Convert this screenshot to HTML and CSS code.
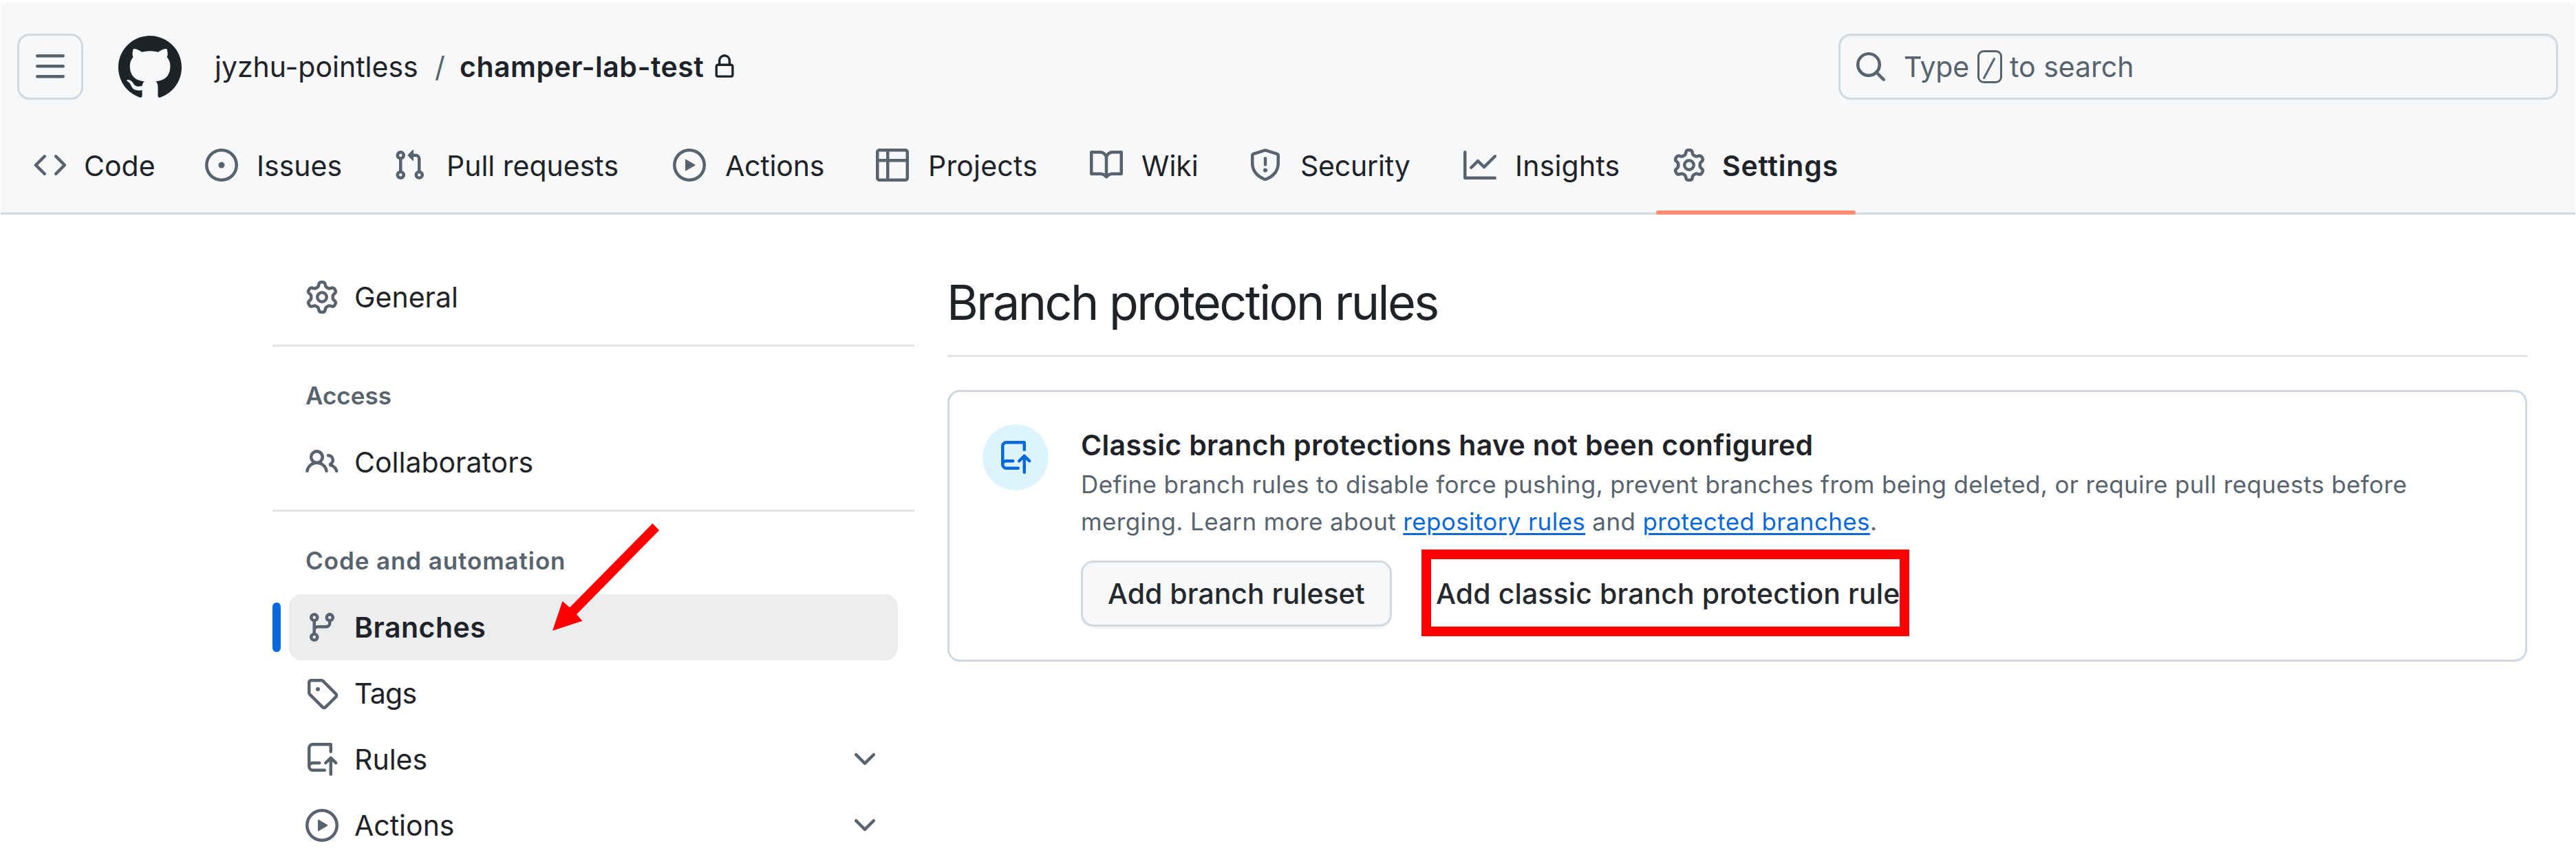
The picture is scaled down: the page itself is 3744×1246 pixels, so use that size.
FILE: index.html
```
<!DOCTYPE html>
<html lang="en">
<head>
<meta charset="utf-8">
<title>Branches · jyzhu-pointless/champer-lab-test</title>
<link rel="stylesheet" href="styles.css">
</head>
<body>
<svg class="sprite" aria-hidden="true">
  <symbol id="i-bars" viewBox="0 0 16 16"><path d="M1 2.75A.75.75 0 0 1 1.75 2h12.5a.75.75 0 0 1 0 1.5H1.75A.75.75 0 0 1 1 2.75Zm0 5A.75.75 0 0 1 1.75 7h12.5a.75.75 0 0 1 0 1.5H1.75A.75.75 0 0 1 1 7.75ZM1.75 12h12.5a.75.75 0 0 1 0 1.5H1.75a.75.75 0 0 1 0-1.5Z"/></symbol>
  <symbol id="i-mark" viewBox="0 0 24 24"><path d="M12.5.75C6.146.75 1 5.896 1 12.25c0 5.089 3.292 9.387 7.863 10.91.575.101.79-.244.79-.546 0-.273-.014-1.178-.014-2.142-2.889.532-3.636-.704-3.866-1.35-.13-.331-.69-1.352-1.18-1.625-.402-.216-.977-.748-.014-.762.906-.014 1.553.834 1.769 1.179 1.035 1.74 2.688 1.25 3.349.948.1-.747.402-1.25.733-1.538-2.559-.287-5.232-1.279-5.232-5.678 0-1.25.445-2.285 1.178-3.09-.115-.288-.517-1.467.115-3.048 0 0 .963-.302 3.163 1.179.92-.259 1.897-.388 2.875-.388.977 0 1.955.13 2.875.388 2.2-1.495 3.162-1.179 3.162-1.179.633 1.581.23 2.76.115 3.048.733.805 1.179 1.825 1.179 3.09 0 4.413-2.688 5.39-5.247 5.678.417.36.776 1.05.776 2.128 0 1.538-.014 2.774-.014 3.162 0 .302.216.662.79.547C20.709 21.637 24 17.324 24 12.25 24 5.896 18.854.75 12.5.75Z"/></symbol>
  <symbol id="i-lock" viewBox="0 0 16 16"><path d="M4 4a4 4 0 0 1 8 0v2h.25c.966 0 1.75.784 1.75 1.75v5.5A1.75 1.75 0 0 1 12.25 15h-8.5A1.75 1.75 0 0 1 2 13.25v-5.5C2 6.784 2.784 6 3.75 6H4Zm8.25 3.5h-8.5a.25.25 0 0 0-.25.25v5.5c0 .138.112.25.25.25h8.5a.25.25 0 0 0 .25-.25v-5.5a.25.25 0 0 0-.25-.25ZM10.5 6V4a2.5 2.5 0 1 0-5 0v2Z"/></symbol>
  <symbol id="i-search" viewBox="0 0 16 16"><path d="M10.68 11.74a6 6 0 0 1-7.922-8.982 6 6 0 0 1 8.982 7.922l3.04 3.04a.749.749 0 0 1-.326 1.275.749.749 0 0 1-.734-.215ZM11.5 7a4.499 4.499 0 1 0-8.997 0A4.499 4.499 0 0 0 11.5 7Z"/></symbol>
  <symbol id="i-code" viewBox="0 0 16 16"><path d="m11.28 3.22 4.25 4.25a.75.75 0 0 1 0 1.06l-4.25 4.25a.749.749 0 0 1-1.275-.326.749.749 0 0 1 .215-.734L13.94 8l-3.72-3.72a.749.749 0 0 1 .326-1.275.749.749 0 0 1 .734.215Zm-6.56 0a.751.751 0 0 1 1.042.018.751.751 0 0 1 .018 1.042L2.06 8l3.72 3.72a.749.749 0 0 1-.326 1.275.749.749 0 0 1-.734-.215L.47 8.53a.75.75 0 0 1 0-1.06Z"/></symbol>
  <symbol id="i-issue" viewBox="0 0 16 16"><path d="M8 9.5a1.5 1.5 0 1 0 0-3 1.5 1.5 0 0 0 0 3Z"/><path d="M8 0a8 8 0 1 1 0 16A8 8 0 0 1 8 0ZM1.5 8a6.5 6.5 0 1 0 13 0 6.5 6.5 0 0 0-13 0Z"/></symbol>
  <symbol id="i-pull" viewBox="0 0 16 16"><path d="M1.5 3.25a2.25 2.25 0 1 1 3 2.122v5.256a2.251 2.251 0 1 1-1.5 0V5.372A2.25 2.25 0 0 1 1.5 3.25Zm5.677-.177L9.573.677A.25.25 0 0 1 10 .854V2.5h1A2.5 2.5 0 0 1 13.5 5v5.628a2.251 2.251 0 1 1-1.5 0V5a1 1 0 0 0-1-1h-1v1.646a.25.25 0 0 1-.427.177L7.177 3.427a.25.25 0 0 1 0-.354ZM3.75 2.5a.75.75 0 1 0 0 1.5.75.75 0 0 0 0-1.5Zm0 9.5a.75.75 0 1 0 0 1.5.75.75 0 0 0 0-1.5Zm8.25.75a.75.75 0 1 0 1.5 0 .75.75 0 0 0-1.5 0Z"/></symbol>
  <symbol id="i-play" viewBox="0 0 16 16"><path d="M8 0a8 8 0 1 1 0 16A8 8 0 0 1 8 0ZM1.5 8a6.5 6.5 0 1 0 13 0 6.5 6.5 0 0 0-13 0Zm4.879-2.773 4.264 2.559a.25.25 0 0 1 0 .428l-4.264 2.559A.25.25 0 0 1 6 10.559V5.442a.25.25 0 0 1 .379-.215Z"/></symbol>
  <symbol id="i-table" viewBox="0 0 16 16"><path d="M0 1.75C0 .784.784 0 1.75 0h12.5C15.216 0 16 .784 16 1.75v12.5A1.75 1.75 0 0 1 14.25 16H1.75A1.75 1.75 0 0 1 0 14.25ZM6.5 6.5v8h7.75a.25.25 0 0 0 .25-.25V6.5Zm8-1.5V1.75a.25.25 0 0 0-.25-.25H6.5V5Zm-13 1.5v7.75c0 .138.112.25.25.25H5v-8ZM5 5V1.5H1.75a.25.25 0 0 0-.25.25V5Z"/></symbol>
  <symbol id="i-book" viewBox="0 0 16 16"><path d="M0 1.75A.75.75 0 0 1 .75 1h4.253c1.227 0 2.317.59 3 1.501A3.743 3.743 0 0 1 11.006 1h4.245a.75.75 0 0 1 .75.75v10.5a.75.75 0 0 1-.75.75h-4.507a2.25 2.25 0 0 0-1.591.659l-.622.621a.75.75 0 0 1-1.06 0l-.622-.621A2.25 2.25 0 0 0 5.258 13H.75a.75.75 0 0 1-.75-.75Zm7.251 10.324.004-5.073-.002-2.253A2.25 2.25 0 0 0 5.003 2.5H1.5v9h3.757a3.75 3.75 0 0 1 1.994.574ZM8.755 4.75l-.004 7.322a3.752 3.752 0 0 1 1.992-.572H14.5v-9h-3.495a2.25 2.25 0 0 0-2.25 2.25Z"/></symbol>
  <symbol id="i-shield" viewBox="0 0 16 16"><path d="M7.467.133a1.748 1.748 0 0 1 1.066 0l5.25 1.68A1.75 1.75 0 0 1 15 3.48V7c0 1.566-.32 3.182-1.303 4.682-.983 1.498-2.585 2.813-5.032 3.855a1.697 1.697 0 0 1-1.33 0c-2.447-1.042-4.049-2.357-5.032-3.855C1.32 10.182 1 8.566 1 7V3.48a1.75 1.75 0 0 1 1.217-1.667Zm.61 1.429a.25.25 0 0 0-.153 0l-5.25 1.68a.25.25 0 0 0-.174.238V7c0 1.358.275 2.666 1.057 3.86.784 1.194 2.121 2.34 4.366 3.297a.196.196 0 0 0 .154 0c2.245-.956 3.582-2.104 4.366-3.298C13.225 9.666 13.5 8.36 13.5 7V3.48a.251.251 0 0 0-.174-.237l-5.25-1.68ZM8.75 4.75v3a.75.75 0 0 1-1.5 0v-3a.75.75 0 0 1 1.5 0ZM9 10.5a1 1 0 1 1-2 0 1 1 0 0 1 2 0Z"/></symbol>
  <symbol id="i-graph" viewBox="0 0 16 16"><path d="M1.5 1.75V13.5h13.75a.75.75 0 0 1 0 1.5H.75a.75.75 0 0 1-.75-.75V1.75a.75.75 0 0 1 1.5 0Zm14.28 2.53-5.25 5.25a.75.75 0 0 1-1.06 0L7 7.06 4.28 9.78a.751.751 0 0 1-1.042-.018.751.751 0 0 1-.018-1.042l3.25-3.25a.75.75 0 0 1 1.06 0L10 7.94l4.72-4.72a.751.751 0 0 1 1.042.018.751.751 0 0 1 .018 1.042Z"/></symbol>
  <symbol id="i-gear" viewBox="0 0 16 16"><path d="M8 0a8.2 8.2 0 0 1 .701.031C9.444.095 9.99.645 10.16 1.29l.288 1.107c.018.066.079.158.212.224.231.114.454.243.668.386.123.082.233.09.299.071l1.103-.303c.644-.176 1.392.021 1.82.63.27.385.506.792.704 1.218.315.675.111 1.422-.364 1.891l-.814.806c-.049.048-.098.147-.088.294.016.257.016.515 0 .772-.01.147.038.246.088.294l.814.806c.475.469.679 1.216.364 1.891a7.977 7.977 0 0 1-.704 1.217c-.428.61-1.176.807-1.82.63l-1.102-.302c-.067-.019-.177-.011-.3.071a5.909 5.909 0 0 1-.668.386c-.133.066-.194.158-.211.224l-.29 1.106c-.168.646-.715 1.196-1.458 1.26a8.006 8.006 0 0 1-1.402 0c-.743-.064-1.289-.614-1.458-1.26l-.289-1.106c-.018-.066-.079-.158-.212-.224a5.738 5.738 0 0 1-.668-.386c-.123-.082-.233-.09-.299-.071l-1.103.303c-.644.176-1.392-.021-1.82-.63a8.12 8.12 0 0 1-.704-1.218c-.315-.675-.111-1.422.363-1.891l.815-.806c.05-.048.098-.147.088-.294a6.214 6.214 0 0 1 0-.772c.01-.147-.038-.246-.088-.294l-.815-.806C.635 6.045.431 5.298.746 4.623a7.92 7.92 0 0 1 .704-1.217c.428-.61 1.176-.807 1.82-.63l1.102.302c.067.019.177.011.3-.071.214-.143.437-.272.668-.386.133-.066.194-.158.211-.224l.29-1.106C6.009.645 6.556.095 7.299.03 7.53.01 7.764 0 8 0Zm-.571 1.525c-.036.003-.108.036-.137.146l-.289 1.105c-.147.561-.549.967-.998 1.189-.173.086-.34.183-.5.29-.417.278-.97.423-1.529.27l-1.103-.303c-.109-.03-.175.016-.195.045-.22.312-.412.644-.573.99-.014.031-.021.11.059.19l.815.806c.411.406.562.957.53 1.456a4.709 4.709 0 0 0 0 .582c.032.499-.119 1.05-.53 1.456l-.815.806c-.081.08-.073.159-.059.19.162.346.353.677.573.989.02.03.085.076.195.046l1.102-.303c.56-.153 1.113-.008 1.53.27.161.107.328.204.501.29.447.222.85.629.997 1.189l.289 1.105c.029.109.101.143.137.146a6.6 6.6 0 0 0 1.142 0c.036-.003.108-.036.137-.146l.289-1.105c.147-.561.549-.967.998-1.189.173-.086.34-.183.5-.29.417-.278.97-.423 1.529-.27l1.103.303c.109.029.175-.016.195-.045.22-.313.411-.644.573-.99.014-.031.021-.11-.059-.19l-.815-.806c-.411-.406-.562-.957-.53-1.456a4.709 4.709 0 0 0 0-.582c-.032-.499.119-1.05.53-1.456l.815-.806c.081-.08.073-.159.059-.19a6.464 6.464 0 0 0-.573-.989c-.02-.03-.085-.076-.195-.046l-1.102.303c-.56.153-1.113.008-1.53-.27a4.44 4.44 0 0 0-.501-.29c-.447-.222-.85-.629-.997-1.189l-.289-1.105c-.029-.11-.101-.143-.137-.146a6.6 6.6 0 0 0-1.142 0ZM11 8a3 3 0 1 1-6 0 3 3 0 0 1 6 0ZM9.5 8a1.5 1.5 0 1 0-3.001.001A1.5 1.5 0 0 0 9.5 8Z"/></symbol>
  <symbol id="i-people" viewBox="0 0 16 16"><path d="M2 5.5a3.5 3.5 0 1 1 5.898 2.549 5.508 5.508 0 0 1 3.034 4.084.75.75 0 1 1-1.482.235 4 4 0 0 0-7.9 0 .75.75 0 0 1-1.482-.236A5.507 5.507 0 0 1 3.102 8.05 3.493 3.493 0 0 1 2 5.5ZM11 4a3.001 3.001 0 0 1 2.22 5.018 5.01 5.01 0 0 1 2.56 3.012.749.749 0 0 1-.885.954.752.752 0 0 1-.549-.514 3.507 3.507 0 0 0-2.522-2.372.75.75 0 0 1-.574-.73v-.352a.75.75 0 0 1 .416-.672A1.5 1.5 0 0 0 11 5.5.75.75 0 0 1 11 4Zm-5.5-.5a2 2 0 1 0-.001 3.999A2 2 0 0 0 5.5 3.5Z"/></symbol>
  <symbol id="i-branch" viewBox="0 0 16 16"><path d="M9.5 3.25a2.25 2.25 0 1 1 3 2.122V6A2.5 2.5 0 0 1 10 8.5H6a1 1 0 0 0-1 1v1.128a2.251 2.251 0 1 1-1.5 0V5.372a2.25 2.25 0 1 1 1.5 0v1.836A2.493 2.493 0 0 1 6 7h4a1 1 0 0 0 1-1v-.628A2.25 2.25 0 0 1 9.5 3.25Zm-6 0a.75.75 0 1 0 1.5 0 .75.75 0 0 0-1.5 0Zm8.25-.75a.75.75 0 1 0 0 1.5.75.75 0 0 0 0-1.5ZM4.25 12a.75.75 0 1 0 0 1.5.75.75 0 0 0 0-1.5Z"/></symbol>
  <symbol id="i-tag" viewBox="0 0 16 16"><path d="M1 7.775V2.75C1 1.784 1.784 1 2.75 1h5.025c.464 0 .91.184 1.238.513l6.25 6.25a1.75 1.75 0 0 1 0 2.474l-5.026 5.026a1.75 1.75 0 0 1-2.474 0l-6.25-6.25A1.752 1.752 0 0 1 1 7.775Zm1.5 0c0 .066.026.13.073.177l6.25 6.25a.25.25 0 0 0 .354 0l5.025-5.025a.25.25 0 0 0 0-.354l-6.25-6.25a.25.25 0 0 0-.177-.073H2.75a.25.25 0 0 0-.25.25ZM6 5a1 1 0 1 1 0 2 1 1 0 0 1 0-2Z"/></symbol>
  <symbol id="i-push" viewBox="0 0 16 16"><path d="M1 2.5A2.5 2.5 0 0 1 3.5 0h8.75a.75.75 0 0 1 .75.75v3.5a.75.75 0 0 1-1.5 0V1.5h-8a1 1 0 0 0-1 1v6.708A2.493 2.493 0 0 1 3.5 9h3.25a.75.75 0 0 1 0 1.5H3.5a1 1 0 0 0 0 2h5.75a.75.75 0 0 1 0 1.5H3.5A2.5 2.5 0 0 1 1 11.5Zm13.23 7.79h-.001l-1.224-1.224v6.184a.75.75 0 0 1-1.5 0V9.066L10.28 10.29a.75.75 0 0 1-1.06-1.061l2.505-2.504a.75.75 0 0 1 1.06 0L15.29 9.23a.751.751 0 0 1-.018 1.042.751.751 0 0 1-1.042.018Z"/></symbol>
  <symbol id="i-chevron" viewBox="0 0 16 16"><path d="M12.78 5.22a.749.749 0 0 1 0 1.06l-4.25 4.25a.749.749 0 0 1-1.06 0L3.22 6.28a.749.749 0 1 1 1.06-1.06L8 8.939l3.72-3.719a.749.749 0 0 1 1.06 0Z"/></symbol>
</svg>

<header class="header">
  <div class="topbar">
    <button class="menu-button" aria-label="Open menu"><svg class="icon"><use href="#i-bars"/></svg></button>
    <svg class="mark"><use href="#i-mark"/></svg>
    <div class="crumbs">
      <span class="owner">jyzhu-pointless</span>
      <span class="slash">/</span>
      <span class="repo">champer-lab-test</span>
      <svg class="lock"><use href="#i-lock"/></svg>
    </div>
    <div class="search">
      <svg class="icon"><use href="#i-search"/></svg>
      <span class="type">Type</span>
      <kbd class="key"><svg viewBox="0 0 36 48"><path d="M9.5 40.5 24.5 12.5"/></svg></kbd>
      <span class="to-search">to search</span>
    </div>
  </div>
  <nav class="tabs">
    <a class="tab code"><svg class="icon"><use href="#i-code"/></svg><span>Code</span></a>
    <a class="tab issues"><svg class="icon"><use href="#i-issue"/></svg><span>Issues</span></a>
    <a class="tab pulls"><svg class="icon"><use href="#i-pull"/></svg><span>Pull requests</span></a>
    <a class="tab actions"><svg class="icon"><use href="#i-play"/></svg><span>Actions</span></a>
    <a class="tab projects"><svg class="icon"><use href="#i-table"/></svg><span>Projects</span></a>
    <a class="tab wiki"><svg class="icon"><use href="#i-book"/></svg><span>Wiki</span></a>
    <a class="tab security"><svg class="icon"><use href="#i-shield"/></svg><span>Security</span></a>
    <a class="tab insights"><svg class="icon"><use href="#i-graph"/></svg><span>Insights</span></a>
    <a class="tab settings"><svg class="icon"><use href="#i-gear"/></svg><span>Settings</span></a>
  </nav>
</header>

<div class="page">
  <aside class="sidebar">
    <a class="row"><svg class="icon"><use href="#i-gear"/></svg><span>General</span></a>
    <hr class="rule">
    <h3 class="group">Access</h3>
    <a class="row"><svg class="icon"><use href="#i-people"/></svg><span>Collaborators</span></a>
    <hr class="rule">
    <h3 class="group wide">Code and automation</h3>
    <a class="row current"><svg class="icon"><use href="#i-branch"/></svg><span>Branches</span></a>
    <a class="row"><svg class="icon"><use href="#i-tag"/></svg><span class="tags">Tags</span></a>
    <a class="row"><svg class="icon"><use href="#i-push"/></svg><span>Rules</span><svg class="icon chevron"><use href="#i-chevron"/></svg></a>
    <a class="row"><svg class="icon"><use href="#i-play"/></svg><span>Actions</span><svg class="icon chevron"><use href="#i-chevron"/></svg></a>
  </aside>

  <main class="main">
    <h2 class="title">Branch protection rules</h2>
    <section class="card">
      <div class="badge"><svg class="icon"><use href="#i-push"/></svg></div>
      <div class="card-body">
        <h3 class="card-title">Classic branch protections have not been configured</h3>
        <p class="desc"><span class="first">Define branch rules to disable force pushing, prevent branches from being deleted, or require pull requests before</span><br><span class="second">merging. Learn more about <a>repository rules</a> and <a>protected branches</a>.</span></p>
        <div class="buttons">
          <button class="button">Add branch ruleset</button>
          <button class="button ghost">Add classic branch protection rule</button>
        </div>
      </div>
    </section>
  </main>
</div>

<div class="highlight"></div>
<svg class="arrow" viewBox="0 0 155 156"><path d="M145.5 0 155 10 35 132.300 43.500 141.700 0 156 14.500 113 25 122.300Z"/></svg>
</body>
</html>
```
FILE: styles.css
```
* { box-sizing: border-box; }

body {
  margin: 0;
  width: 3744px;
  height: 1246px;
  overflow: hidden;
  position: relative;
  background: #fff;
  color: #1f2328;
  font: 400 41px/60px Inter, "Liberation Sans", sans-serif;
  white-space: nowrap;
}

.sprite { display: none; }
.icon { width: 48px; height: 48px; flex: none; fill: #59636e; }
h2, h3, p { margin: 0; }
button { font: inherit; color: inherit; }

/* Header */
.header {
  margin: 4px 1px 0;
  height: 308px;
  background: #f6f8fa;
  border-bottom: 3px solid #d1d9e0;
}
.topbar {
  display: flex;
  align-items: center;
  height: 141px;
  padding: 45px 25px 0 24px;
}
.menu-button {
  display: flex;
  align-items: center;
  justify-content: center;
  width: 96px;
  height: 96px;
  padding: 0;
  border: 3px solid #d1d9e0;
  border-radius: 18px;
  background: none;
}
.mark { width: 96px; height: 96px; margin-left: 47px; fill: #1f2328; }
.crumbs { display: flex; align-items: center; margin-left: 48px; }
.owner { width: 296px; }
.slash { width: 16px; margin: 0 20px 0 24px; color: #59636e; }
.repo { width: 358px; font-weight: 600; letter-spacing: .5px; }
.lock { width: 36px; height: 36px; margin-left: 9px; fill: #1f2328; }

.search {
  display: flex;
  align-items: center;
  width: 1046px;
  height: 96px;
  margin-left: auto;
  padding-left: 20px;
  border: 3px solid #d1d9e0;
  border-radius: 18px;
  box-shadow: inset 0 3px 0 #eff2f5;
  color: #59636e;
}
.type { width: 96px; margin-left: 24px; letter-spacing: -.3px; }
.key {
  display: flex;
  width: 36px;
  height: 48px;
  margin: 0 11px 0 11px;
  border: 3px solid #59636e;
  border-radius: 9px;
}
.key svg { width: 36px; height: 48px; margin: -3px; fill: none; stroke: #59636e; stroke-width: 3; stroke-linecap: round; }

/* Repository tabs */
.tabs { display: flex; gap: 24px; height: 163px; padding: 27px 0 0 24px; }
.tab {
  display: flex;
  align-items: center;
  gap: 27px;
  height: 136px;
  padding: 0 24px;
}
.tab span { padding-top: 1px; }
.tab.code { width: 225px; gap: 25px; }
.tab.issues { width: 249px; }
.tab.pulls { width: 383px; gap: 30px; }
.tab.actions { width: 271px; gap: 28px; letter-spacing: -.2px; }
.tab.projects { width: 287px; gap: 28px; letter-spacing: .2px; }
.tab.wiki { width: 207px; }
.tab.security { width: 288px; letter-spacing: -.2px; }
.tab.insights { width: 280px; letter-spacing: .2px; }
.tab.settings { position: relative; width: 290px; gap: 24px; font-weight: 600; letter-spacing: .8px; }
.tab.settings::after {
  content: "";
  position: absolute;
  left: 0;
  right: 0;
  bottom: -4px;
  height: 6px;
  border-radius: 3px;
  background: #fd8c73;
}

/* Page columns */
.page { display: flex; gap: 48px; padding: 72px 71px 0 396px; }
.sidebar { width: 933px; flex: none; }
.row {
  position: relative;
  display: flex;
  align-items: center;
  gap: 23px;
  height: 96px;
  margin: 0 24px;
  padding: 0 24px;
  border-radius: 18px;
}
.row .chevron { margin-left: auto; }
.row .tags { letter-spacing: -.7px; }
.row.current { background: #ecedef; font-weight: 600; letter-spacing: .5px; }
.row.current::before {
  content: "";
  position: absolute;
  left: -24px;
  top: 12px;
  width: 12px;
  height: 72px;
  border-radius: 6px;
  background: #0969da;
}
.rule { height: 3px; margin: 21px 0 0; border: 0; background: #dfe4e9; }
.group {
  height: 120px;
  padding: 44px 48px 0;
  font-size: 35px;
  font-weight: 600;
  line-height: 54px;
  color: #59636e;
}
.group.wide { letter-spacing: .9px; }

/* Main column */
.main { flex: 1; min-width: 0; }
.title {
  height: 135px;
  padding: 7px 0 0;
  border-bottom: 3px solid #dfe4e9;
  font-size: 70px;
  font-weight: 400;
  line-height: 97px;
  letter-spacing: -2.55px;
  text-indent: -1px;
}
.card {
  display: flex;
  gap: 47px;
  height: 395px;
  margin-top: 48px;
  padding: 47px 48px;
  border: 3px solid #d1d9e0;
  border-radius: 18px;
}
.badge {
  display: flex;
  align-items: center;
  justify-content: center;
  width: 96px;
  height: 96px;
  flex: none;
  border-radius: 50%;
  background: #ddf4ff;
}
.badge .icon { fill: #0969da; }
.card-title {
  font-size: 41px;
  font-weight: 600;
  line-height: 60px;
  letter-spacing: .34px;
}
.desc { font-size: 35px; line-height: 54px; color: #59636e; }
.first, .second { letter-spacing: .37px; }
.desc a {
  color: #0969da;
  text-decoration: underline;
  text-decoration-thickness: 3px;
  text-underline-offset: 4px;
}
.buttons { display: flex; margin-top: 30px; }
.button {
  width: 452px;
  height: 96px;
  padding: 0 0 0 36px;
  border: 3px solid #d1d9e0;
  border-radius: 18px;
  background: #f6f8fa;
  box-shadow: 0 3px 0 rgba(31, 35, 40, .04);
  font-weight: 500;
  color: #25292e;
  text-align: left;
}
.button.ghost {
  width: 750px;
  margin-left: 24px;
  padding-left: 37px;
  border-color: transparent;
  background: none;
  box-shadow: none;
  letter-spacing: .1px;
}

/* Annotations over the page */
.highlight {
  position: absolute;
  left: 2066px;
  top: 799px;
  width: 709px;
  height: 126px;
  border: 14px solid #f00;
}
.arrow {
  position: absolute;
  left: 803px;
  top: 761px;
  width: 155px;
  height: 156px;
  fill: #f00;
}
```
